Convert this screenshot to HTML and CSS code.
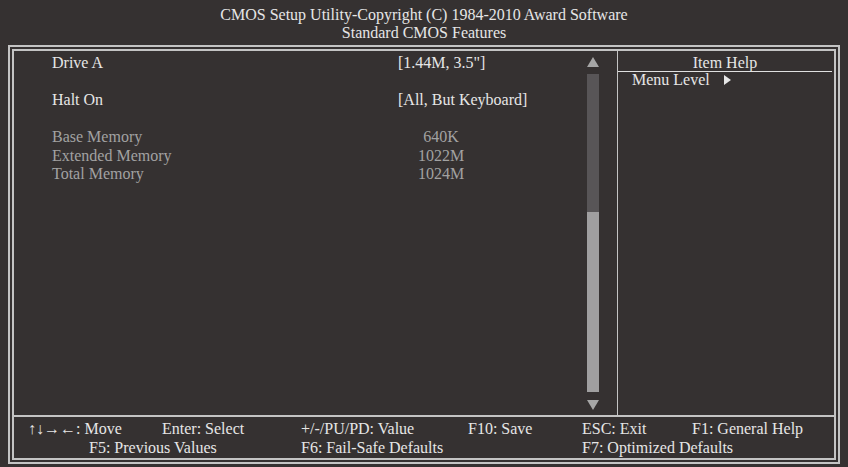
FILE: index.html
```html
<!DOCTYPE html>
<html lang="en">
<head>
    <meta charset="UTF-8">
    <title>Standard CMOS Features</title>
    <link rel="stylesheet" href="styles.css">
</head>
<body>
    <div class="header">
        <div>CMOS Setup Utility-Copyright (C) 1984-2010 Award Software</div>
        <div>Standard CMOS Features</div>
    </div>

    <div class="frame">
        <div class="main">
            <div class="items">
                <div class="row"><span class="label">Drive A</span><span class="value">[1.44M, 3.5"]</span></div>
                <div class="row"></div>
                <div class="row"><span class="label">Halt On</span><span class="value">[All, But Keyboard]</span></div>
                <div class="row"></div>
                <div class="row dim"><span class="label">Base Memory</span><span class="mem">640K</span></div>
                <div class="row dim"><span class="label">Extended Memory</span><span class="mem">1022M</span></div>
                <div class="row dim"><span class="label">Total Memory</span><span class="mem">1024M</span></div>
            </div>
            <div class="scroll">
                <div class="arrow-up"></div>
                <div class="track">
                    <div class="thumb"></div>
                </div>
                <div class="arrow-down"></div>
            </div>
            <div class="help">
                <div class="help-title">Item Help</div>
                <div class="help-text">Menu Level <span class="caret"></span></div>
            </div>
        </div>
        <div class="keys">
            <div class="key-row first">
                <span class="k-move">↑↓→←: Move</span>
                <span class="k-enter">Enter: Select</span>
                <span class="k-value">+/-/PU/PD: Value</span>
                <span class="k-save">F10: Save</span>
                <span class="k-exit">ESC: Exit</span>
                <span>F1: General Help</span>
            </div>
            <div class="key-row second">
                <span class="k-prev">F5: Previous Values</span>
                <span class="k-fail">F6: Fail-Safe Defaults</span>
                <span>F7: Optimized Defaults</span>
            </div>
        </div>
    </div>
</body>
</html>
```

FILE: styles.css
```css
body {
    margin: 0;
    background-color: #353131;
    color: #e6e6e6;
    font-family: "Liberation Serif", "Times New Roman", serif;
    font-size: 16px;
}
.header {
    padding-top: 6px;
    margin-bottom: 3px;
    text-align: center;
    line-height: 18px;
}
.frame {
    box-sizing: border-box;
    height: 419px;
    margin: 0 8px;
    border: 6px double #c4c4c4;
    display: flex;
    flex-direction: column;
}
.main {
    height: 364px;
    display: flex;
    border-bottom: 2px solid #c4c4c4;
}
.items {
    flex: 1;
    padding: 3px 0 0 38px;
    line-height: 18.5px;
}
.row {
    display: flex;
    height: 18.5px;
}
.label {
    width: 346px;
}
.dim {
    color: #a2a2a2;
}
.mem {
    width: 86px;
    text-align: center;
}
/* scroll bar */
.scroll {
    width: 12px;
    margin-right: 18px;
    padding-top: 6px;
    display: flex;
    flex-direction: column;
    align-items: center;
}
.arrow-up, .arrow-down {
    width: 0;
    height: 0;
    border-left: 6px solid transparent;
    border-right: 6px solid transparent;
}
.arrow-up {
    border-bottom: 10px solid #a6a6a6;
    margin-bottom: 7px;
}
.arrow-down {
    border-top: 10px solid #a6a6a6;
    margin-top: 8px;
}
.track {
    width: 12px;
    height: 318px;
    background-color: #585557;
    display: flex;
    flex-direction: column;
    justify-content: flex-end;
}
.thumb {
    height: 180px;
    background-color: #a09fa0;
}
/* item help */
.help {
    width: 216px;
    border-left: 1px solid #c4c4c4;
}
.help-title {
    margin-top: 3px;
    margin-right: 2px;
    text-align: center;
    line-height: 17px;
    border-bottom: 1px solid #e0e0e0;
}
.help-text {
    padding-left: 14px;
    line-height: 16px;
}
.caret {
    display: inline-block;
    width: 0;
    height: 0;
    margin-left: 10px;
    border-top: 5px solid transparent;
    border-bottom: 5px solid transparent;
    border-left: 7px solid #e6e6e6;
}
/* key legend */
.keys {
    padding-top: 2px;
    line-height: 19px;
}
.key-row {
    display: flex;
    white-space: nowrap;
}
.first {
    padding-left: 14px;
}
.second {
    padding-left: 75px;
}
.k-move { width: 134px; }
.k-enter { width: 139px; }
.k-value { width: 167px; }
.k-save { width: 114px; }
.k-exit { width: 110px; }
.k-prev { width: 212px; }
.k-fail { width: 281px; }
```
